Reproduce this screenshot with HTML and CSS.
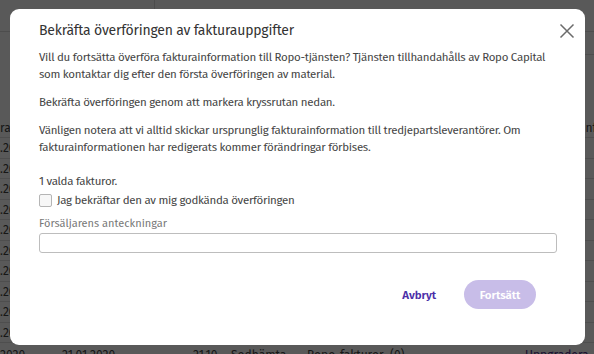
FILE: index.html
```html
<!DOCTYPE html>
<html lang="sv">
<head>
<meta charset="utf-8">
<title>Bekräfta överföringen</title>
<link rel="stylesheet" href="styles.css">
</head>
<body>
<div class="app">
  <div class="topbar"><div class="topbar-left"></div><div class="topbar-right"></div></div>
  <div class="subbar"><div class="subbar-line"></div></div>
  <div class="table">
    <div class="trow thead"><span class="c1">ra</span><span class="cright">Info</span></div>
    <div class="trow"><span class="c1">.2020</span></div>
    <div class="trow"><span class="c1">.2020</span></div>
    <div class="trow"><span class="c1">.2020</span></div>
    <div class="trow"><span class="c1">.2020</span></div>
    <div class="trow"><span class="c1">.2020</span></div>
    <div class="trow"><span class="c1">.2020</span></div>
    <div class="trow"><span class="c1">.2020</span></div>
    <div class="trow"><span class="c1">.2020</span></div>
    <div class="trow"><span class="c1">.2020</span></div>
    <div class="trow"><span class="c1">.2020</span></div>
    <div class="trow last"><span class="b1">2020</span><span class="b2">21.01.2020</span><span class="b3">21.10</span><span class="b4">Sodhämta</span><span class="b5">Ropo-fakturor</span><span class="b7">(0)</span><span class="b8">Uppgradera</span></div>
  </div>
</div>
<div class="overlay"></div>
<div class="modal" role="dialog">
  <button class="close" aria-label="Stäng">
    <svg width="16" height="16" viewBox="0 0 16 16"><path d="M1.5 1.5 L14.5 14.5 M14.5 1.5 L1.5 14.5" stroke="#6b6b6b" stroke-width="1.5" fill="none"/></svg>
  </button>
  <h2 class="title">Bekräfta överföringen av fakturauppgifter</h2>
  <p class="para">Vill du fortsätta överföra fakturainformation till Ropo-tjänsten? Tjänsten tillhandahålls av Ropo Capital<br>som kontaktar dig efter den första överföringen av material.</p>
  <p class="para">Bekräfta överföringen genom att markera kryssrutan nedan.</p>
  <p class="para">Vänligen notera att vi alltid skickar ursprunglig fakturainformation till tredjepartsleverantörer. Om<br>fakturainformationen har redigerats kommer förändringar förbises.</p>
  <p class="count">1 valda fakturor.</p>
  <label class="check"><span class="box"></span><span>Jag bekräftar den av mig godkända överföringen</span></label>
  <div class="field-label">Försäljarens anteckningar</div>
  <div class="input"></div>
  <div class="actions">
    <button class="btn-link">Avbryt</button>
    <button class="btn-primary">Fortsätt</button>
  </div>
</div>
</body>
</html>
```
FILE: styles.css
```css
* { box-sizing: border-box; }
html, body { margin: 0; padding: 0; }
body {
  width: 594px;
  height: 354px;
  overflow: hidden;
  background: #ffffff;
  font-family: "Fira Sans", Lato, "Liberation Sans", sans-serif;
  color: #333;
}
.app { width: 594px; height: 354px; overflow: hidden; }
.topbar { height: 32px; display: flex; border-bottom: 1px solid #ddd; }
.topbar-left { width: 155px; border-right: 1px solid #ddd; }
.subbar { height: 23px; display: flex; justify-content: flex-end; }
.subbar-line { width: 20px; border-bottom: 1px solid #ddd; }
.table { padding-top: 63px; font-size: 12px; color: #444; }
.trow {
  height: 20.5px;
  line-height: 20px;
  display: flex;
  border-bottom: 1px solid #e0e0e0;
  white-space: nowrap;
}
.thead { height: 20px; }
.c1 { width: 60px; }
.cright { margin-left: auto; width: 12px; overflow: hidden; }
.last { border-bottom: 0; line-height: 12px; padding-top: 6px; }
.b1 { width: 62px; }
.b2 { width: 131px; }
.b3 { width: 38px; }
.b4 { width: 76px; }
.b5 { width: 83px; }
.b7 { width: 135px; }
.b8 { color: #4a2a8a; }
.overlay {
  position: fixed;
  inset: 0;
  background: rgba(0, 0, 0, 0.65);
}
.modal {
  position: fixed;
  left: 10px;
  top: 9px;
  width: 575px;
  height: 336px;
  background: #fff;
  border-radius: 9px;
  padding: 12px 28px 0 29px;
  display: flex;
  flex-direction: column;
}
.close {
  position: absolute;
  top: 14px;
  right: 10px;
  width: 16px;
  height: 16px;
  padding: 0;
  border: 0;
  background: none;
  display: flex;
}
.title {
  margin: 0 0 7.5px;
  font-size: 14px;
  line-height: 20px;
  font-weight: 400;
  letter-spacing: -0.2px;
  color: #333;
}
.para, .count, .check {
  font-size: 11.5px;
  line-height: 17px;
  letter-spacing: -0.28px;
  color: #444;
}
.para {
  margin: 0 0 11px;
  white-space: nowrap;
}
.count {
  margin: 6px 0 2px;
}
.check {
  display: flex;
  align-items: center;
  gap: 5px;
}
.box {
  width: 13px;
  height: 13px;
  border: 1px solid #b5b5b5;
  border-radius: 2px;
  background: #f7f7f7;
}
.field-label {
  margin-top: 7px;
  font-size: 11px;
  line-height: 15px;
  color: #777;
}
.input {
  margin-top: 2.5px;
  height: 20px;
  border: 1px solid #bdbdbd;
  border-radius: 3px;
}
.actions {
  margin-top: 27px;
  display: flex;
  justify-content: flex-end;
  align-items: center;
  gap: 28px;
  padding-right: 21px;
}
.btn-link {
  border: 0;
  background: none;
  padding: 0;
  font-family: inherit;
  font-size: 11.5px;
  letter-spacing: -0.1px;
  font-weight: 600;
  color: #4b2fa8;
}
.btn-primary {
  width: 72px;
  height: 29px;
  border: 0;
  border-radius: 15px;
  background: #c8bde8;
  color: #fff;
  font-family: inherit;
  font-size: 11.5px;
  letter-spacing: -0.1px;
  font-weight: 600;
}
```
